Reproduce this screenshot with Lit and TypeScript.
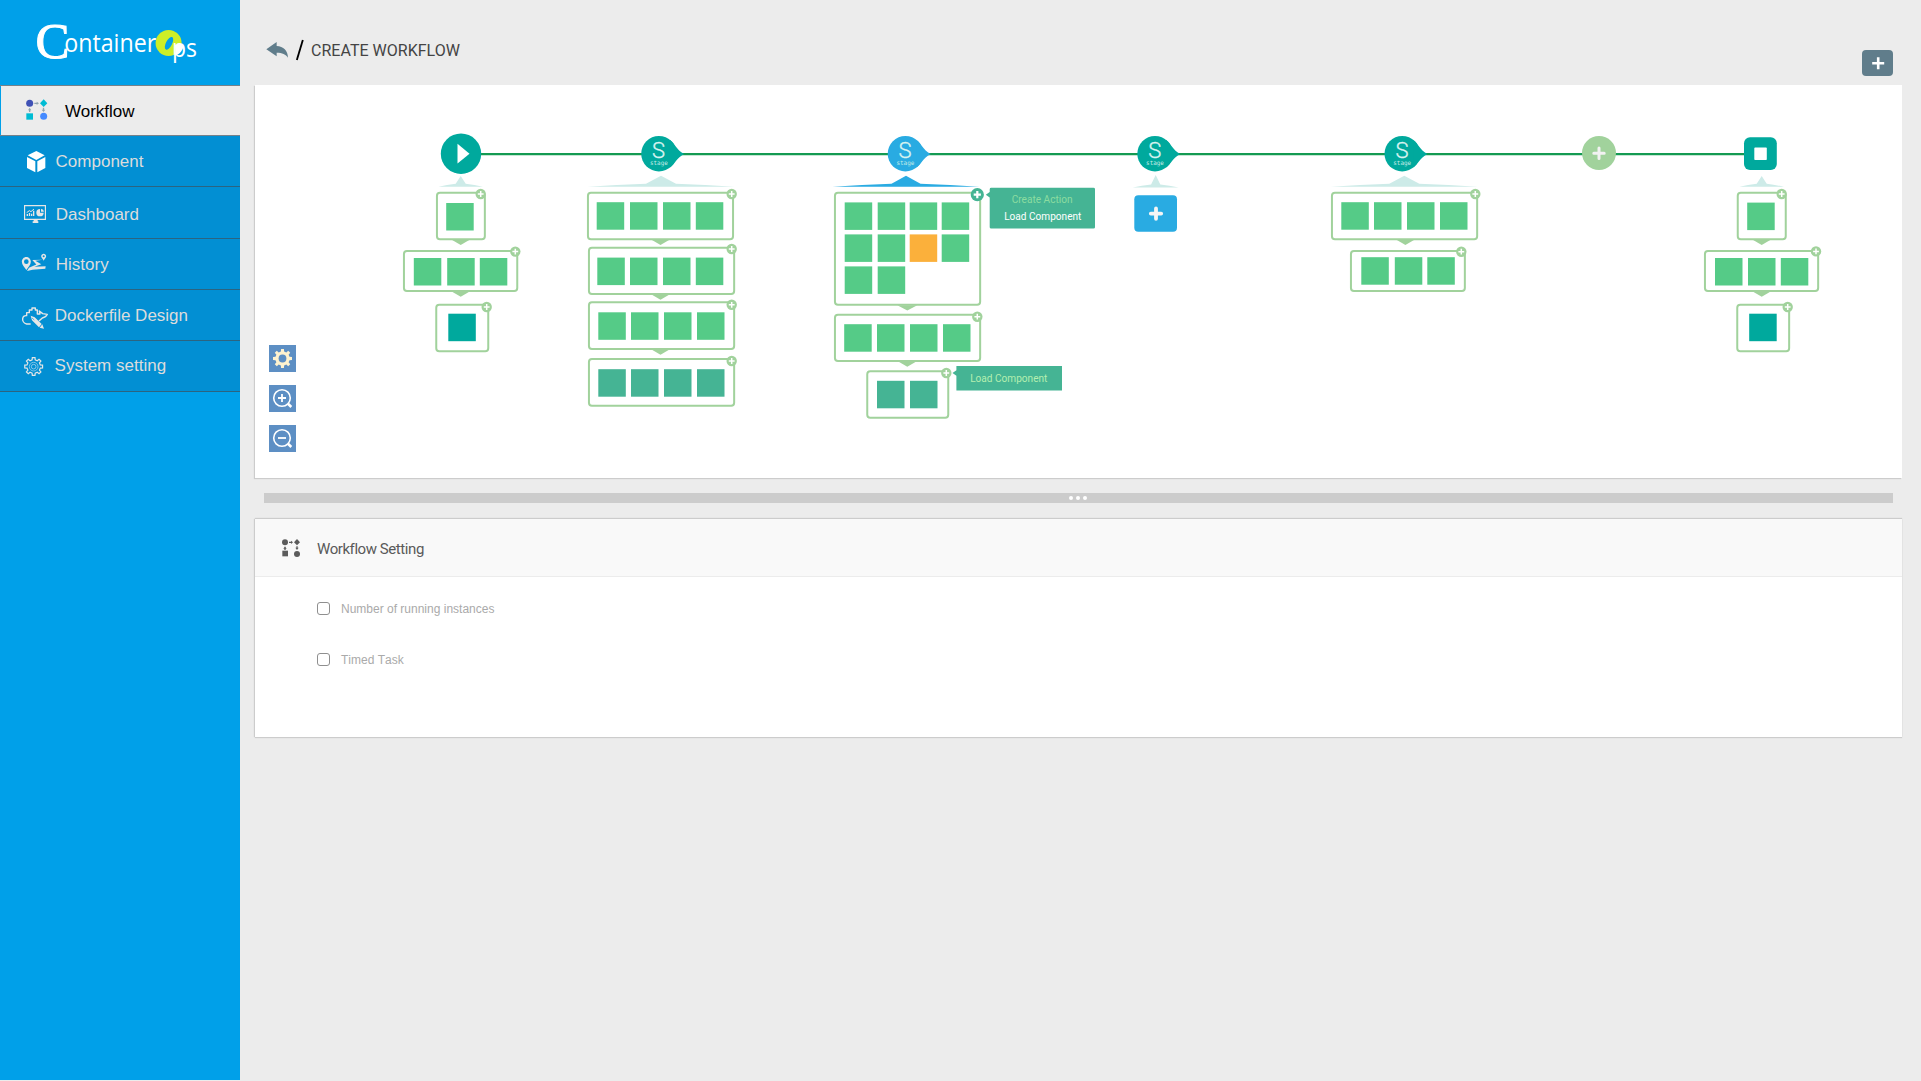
import { LitElement, html, svg, css } from "lit";
import { customElement } from "lit/decorators.js";

const GREEN = "#55cb87";
const TEAL = "#45b494";
const DEEP = "#00a99d";
const BLUE = "#29abe2";
const PALE = "#a1d29c";
const MIST = "#cdebe8";
const ORANGE = "#fbb03b";

interface Box {
  x: number; y: number; r: number; b: number;
  sq: number[]; sy: number[]; fill: string;
  px: number; py: number; big?: boolean;
  tail?: number; tailW?: number; count?: number; accent?: number;
}

const BOXES: Box[] = [
  { x: 436, y: 191.7, r: 485.8, b: 240.2, sq: [446.2], sy: [203], fill: GREEN, px: 480.7, py: 194, tail: 460.7 },
  { x: 403, y: 250, r: 518.2, b: 292, sq: [413.8, 447.2, 479.8], sy: [258], fill: GREEN, px: 515.3, py: 251.6, tail: 460.7 },
  { x: 435.3, y: 303.8, r: 489.2, b: 352.3, sq: [448.3], sy: [313.7], fill: DEEP, px: 486.7, py: 307 },

  { x: 587, y: 191.7, r: 734, b: 240.2, sq: [596.7, 630, 663, 695.8], sy: [202.2], fill: GREEN, px: 731.7, py: 194, tail: 660.5 },
  { x: 588, y: 246.7, r: 735.1, b: 295, sq: [597.3, 630, 663, 695.8], sy: [257.6], fill: GREEN, px: 731.7, py: 249, tail: 660.5 },
  { x: 588, y: 301.2, r: 735.1, b: 350, sq: [598.3, 631, 664, 697], sy: [312.3], fill: GREEN, px: 731.7, py: 304.8, tail: 660.5 },
  { x: 588, y: 358, r: 735.1, b: 406.7, sq: [598.3, 631, 664, 697], sy: [369.2], fill: TEAL, px: 731.7, py: 361 },

  { x: 834, y: 191.7, r: 981.1, b: 305.7, sq: [844.7, 877.7, 909.7, 941.7], sy: [202.4, 234.4, 266.4], fill: GREEN, px: 977.3, py: 194.7, big: true, tail: 907.3, tailW: 10, count: 10, accent: 6 },
  { x: 834, y: 313.8, r: 981.1, b: 362, sq: [844.2, 877, 910, 943], sy: [324.2], fill: GREEN, px: 977.3, py: 316.7, tail: 907.3 },
  { x: 866.3, y: 370.3, r: 949.2, b: 418.8, sq: [877, 910], sy: [380.8], fill: TEAL, px: 946.3, py: 373 },

  { x: 1331, y: 191.7, r: 1478.1, b: 240.2, sq: [1341.3, 1374, 1407, 1440], sy: [202.2], fill: GREEN, px: 1475.3, py: 194, tail: 1405.4 },
  { x: 1350, y: 250, r: 1465.8, b: 292, sq: [1361.3, 1394.8, 1427.3], sy: [257.2], fill: GREEN, px: 1461.3, py: 251.7 },

  { x: 1736.8, y: 191.7, r: 1786.7, b: 240.2, sq: [1747.2], sy: [202.6], fill: GREEN, px: 1781.7, py: 194, tail: 1761.7 },
  { x: 1704, y: 250, r: 1819.1, b: 292, sq: [1715, 1748, 1780.8], sy: [258], fill: GREEN, px: 1816, py: 251.4, tail: 1761.7 },
  { x: 1736.3, y: 303.8, r: 1790.1, b: 352.3, sq: [1749.2], sy: [313.7], fill: DEEP, px: 1787.7, py: 307 },
];

const plus = (x: number, y: number, arm: number, w: number, color: string, round = false) => svg`
  <path d="M${x - arm} ${y}H${x + arm}M${x} ${y - arm}V${y + arm}" stroke=${color}
    stroke-width=${w} stroke-linecap=${round ? "round" : "butt"} fill="none"/>`;

const box = (b: Box) => {
  const cells = b.sy.flatMap((y) => b.sq.map((x) => ({ x, y }))).slice(0, b.count ?? 99);
  const tw = b.tailW ?? 9;
  return svg`
    ${b.tail ? svg`<path d="M${b.tail - tw} ${b.b - 0.5}H${b.tail + tw}L${b.tail} ${b.b + 4.8}Z" fill=${PALE}/>` : ""}
    <rect x=${b.x + 0.95} y=${b.y + 0.95} width=${b.r - b.x - 1.9} height=${b.b - b.y - 1.9}
      rx="3" fill="#fff" stroke=${PALE} stroke-width="2"/>
    ${cells.map((c, i) => svg`<rect x=${c.x} y=${c.y} width="27.500" height="27.500" fill=${i === b.accent ? ORANGE : b.fill}/>`)}
    <circle cx=${b.px} cy=${b.py} r=${b.big ? 6.6 : 5.2} fill=${b.big ? TEAL : PALE}/>
    ${plus(b.px, b.py, b.big ? 3.6 : 2.9, b.big ? 2.2 : 1.5, "#fff")}`;
};

const stage = (x: number, color: string) => svg`
  <circle cx=${x} cy="153.700" r="17.700" fill=${color}/>
  <path d="M${x + 11} 139.800C${x + 16.5} 144 ${x + 17} 149.500 ${x + 25.2} 154C${x + 17} 158.500 ${x + 16.5} 163.500 ${x + 11} 167.600Z" fill=${color}/>
  <text class="s" x=${x - 0.3} y="158" text-anchor="middle">S</text>
  <text class="st" x=${x - 8.9} y="165" textLength="17.800" lengthAdjust="spacingAndGlyphs">stage</text>`;

const roof = (x: number, top: number, shoulder: number, half: number, color: string, base = 186.8) => svg`
  <path d="M${x} ${top}L${x + shoulder} ${base - 3}Q${x + shoulder + (half - shoulder) * 0.5} ${base - 2} ${x + half} ${base}H${x - half}Q${x - shoulder - (half - shoulder) * 0.5} ${base - 2} ${x - shoulder} ${base - 3}Z" fill=${color}/>`;

const gear = (cx: number, cy: number, teeth: number, r1: number, r2: number) => {
  const pts: string[] = [];
  const step = (Math.PI * 2) / teeth;
  for (let i = 0; i < teeth; i++) {
    const a = i * step - Math.PI / 2;
    for (const [k, r] of [[-0.29, r1], [-0.19, r2], [0.19, r2], [0.29, r1]]) {
      pts.push(`${(cx + Math.cos(a + k * step) * r).toFixed(2)} ${(cy + Math.sin(a + k * step) * r).toFixed(2)}`);
    }
  }
  return "M" + pts.join("L") + "Z";
};

const ICONS = {
  workflow: svg`
    <circle cx="89" cy="310" r="10.500" fill="#3f51b5"/>
    <path d="M131 298L142 310L131 321L120 310Z" fill="#00bcd4"/>
    <rect x="79" y="340" width="20" height="19" fill="#00bcd4"/>
    <circle cx="131" cy="349" r="10.500" fill="#448aff"/>
    <path d="M103 308H110V305L117 310L110 315V312H103ZM128.500 323H132.500V329H136L130.500 336L125 329H128.500ZM87 336V331H84L89 323L94 331H91V336Z" fill="#90a4ae"/>`,
  component: svg`
    <path d="M109 453L134 466L109 480L83 466ZM81 471L106 484V517L81 504ZM136 471V504L112 517V484Z" fill="#fff"/>`,
  dashboard: svg`
    <path fill-rule="evenodd" d="M72 45H138V90H113V94H115V99H98V94H101V90H72ZM75.500 49V86H134.500V49Z" fill="#e6e6e6"/>
    <path d="M80 78V72H84V78ZM86.500 78V69H90.500V78ZM93 78V71H97V78ZM99 78V62H103V78Z" fill="#e6e6e6"/>
    <path d="M80 68L88 62L93 65L102 57" stroke="#e6e6e6" stroke-width="3" fill="none"/>
    <path d="M120 57V68H131A11 11 0 1 1 120 57ZM123 56A10 10 0 0 1 132 65H123Z" fill="#e6e6e6"/>`,
  history: svg`
    <path fill-rule="evenodd" d="M79 201C71 201 65.500 208 65.500 215C65.500 224 74 231 79 240C84 231 92.500 224 92.500 215C92.500 208 87 201 79 201ZM79 208A7 7 0 1 1 79 222A7 7 0 1 1 79 208Z" fill="#e6e6e6"/>
    <path fill-rule="evenodd" d="M131 191.500C127 191.500 123.500 195 123.500 199C123.500 203 128 206 131 212C134 206 138.500 203 138.500 199C138.500 195 135 191.500 131 191.500ZM131 196A3 3 0 1 1 131 202A3 3 0 1 1 131 196Z" fill="#e6e6e6"/>
    <path d="M129 209L106 212.500L124 223L103 230.500L137 229L136 236L98 239.500L81 243L87 233L109 223.500L97 210Z" fill="#e6e6e6"/>`,
  docker: svg`
    <path d="M92 402H80C72 400 67 393 68 386C69 379 74 376 80 377V368H88V360H96V354H106V360H112V372H120L118 363L128 371L142 373C139 380 134 383 127 384L117 393" fill="none" stroke="#e6e6e6" stroke-width="4.200" stroke-linejoin="round"/>
    <path d="M92 377L104 382L125 402L117 412L96 391ZM127 403L132 416L119 413Z" fill="#e6e6e6"/>
    <path d="M96 384L103 390" stroke="#028fd3" stroke-width="2"/>`,
  system: svg`
    <path d=${gear(101, 529.5, 8, 20.5, 27)} fill="none" stroke="#e6e6e6" stroke-width="3.600"/>
    <circle cx="101" cy="530" r="13" fill="none" stroke="#a9d4ed" stroke-width="2.200"/>
    <circle cx="101" cy="530" r="7" fill="none" stroke="#a9d4ed" stroke-width="2.400"/>`,
};

const MENU = [
  { key: "workflow", label: "Workflow", w: 65, h: 49, y: 258 },
  { key: "component", label: "Component", w: 55.6, h: 50, y: 408 },
  { key: "dashboard", label: "Dashboard", w: 55.8, h: 51, y: -9 },
  { key: "history", label: "History", w: 55.8, h: 50, y: 147 },
  { key: "docker", label: "Dockerfile Design", w: 54.8, h: 50, y: 300 },
  { key: "system", label: "System setting", w: 54.6, h: 50, y: 453 },
] as const;

@customElement("side-nav")
class SideNav extends LitElement {
  static styles = css`
    :host { display: block; width: 240px; height: 1080px; background: #00a0e9; flex: none; }
    .logo { display: block; }
    .item {
      display: flex; border-bottom: 1px solid #2c6480; background: #028fd3;
      font: 17px "Liberation Sans", Arial, sans-serif; color: #dcdcdc; white-space: nowrap;
    }
    .item svg { display: block; flex: none; }
    .label { align-self: center; line-height: 20px; padding-top: 2px; }
    .workflow { background: #ececec; color: #000; border-top: 1px solid #75818a; border-bottom-color: #75818a; box-shadow: inset 1px 0 #00a0e9; }
    .dashboard .label { padding-top: 5px; }
    .system .label { padding-top: 0; }
    .c { font: 51px "Liberation Serif", serif; fill: #fff; }
    .l { font: 25.5px "Open Sans", sans-serif; fill: #fff; }
  `;
  render() {
    return html`
      <svg class="logo" width="240" height="85" viewBox="0 0 240 85">
        <circle cx="168.600" cy="43" r="13" fill="#cdee27"/>
        <ellipse cx="169" cy="43.300" rx="3.100" ry="7" transform="rotate(27 169 43.300)" fill="#00a0e9"/>
        <path d="M175 45C178 43.500 181.500 44 183.500 46C183 50 180 54 175.500 55.500Z" fill="#fff"/>
        <text class="c" x="35.500" y="58.400" stroke="#fff" stroke-width="1" textLength="34" lengthAdjust="spacingAndGlyphs">C</text>
        <text class="l" x="64.200" y="52.400" textLength="92" lengthAdjust="spacingAndGlyphs">ontainer</text>
        <text class="l" x="172" y="57" textLength="25" lengthAdjust="spacingAndGlyphs">ps</text>
      </svg>
      ${MENU.map((m) => html`
        <div class="item ${m.key}">
          <svg width=${m.w} height=${m.h} viewBox="0 ${m.y} ${m.w * 3} ${m.h * 3}">${ICONS[m.key]}</svg>
          <span class="label">${m.label}</span>
        </div>`)}`;
  }
}

@customElement("workflow-canvas")
class WorkflowCanvas extends LitElement {
  static styles = css`
    :host { display: block; position: relative; height: 393px; background: #fff; box-shadow: -1px 1px 1px #ccc; }
    .graph { display: block; }
    .tools { position: absolute; left: 14px; top: 260px; display: flex; flex-direction: column; gap: 13px; }
    .tool { display: block; background: #5d8fc4; }
    .s { font: 22px Roboto, sans-serif; font-weight: 300; fill: #d9f3f0; stroke: #d9f3f0; stroke-width: 0.3px; }
    .st { font: 6.2px "DejaVu Sans Mono", monospace; fill: #c4ece8; }
    .tip { font: 11px Roboto, sans-serif; }
  `;
  render() {
    return html`
      <svg class="graph" width="1647" height="393" viewBox="255 85 1647 393">
        <path d="M480 154.100H1746" stroke="#149a52" stroke-width="2.200"/>
        <circle cx="461" cy="153.700" r="20.200" fill=${DEEP}/>
        <path d="M457.500 143.800V163.500L469.500 153.700Z" fill="#fff"/>
        ${stage(658.9, DEEP)}${stage(905.4, BLUE)}${stage(1155, DEEP)}${stage(1402.2, DEEP)}
        <circle cx="1599" cy="153" r="17" fill=${PALE}/>
        ${plus(1599, 153.3, 5.2, 3, "#f2f2f2", true)}
        <rect x="1744" y="137.200" width="32.800" height="32.800" rx="6" fill=${DEEP}/>
        <rect x="1754.300" y="147.600" width="12.500" height="12.500" rx="0.800" fill="#fff"/>

        ${roof(460.7, 176, 5, 22.3, MIST)}
        ${roof(661, 175.7, 15, 73.5, MIST)}
        ${roof(906, 175.7, 14.5, 73.5, BLUE)}
        ${roof(1155.7, 175, 4.6, 23, MIST, 187.6)}
        ${roof(1404.3, 175.7, 15, 73.5, MIST)}
        ${roof(1761.7, 176, 5, 22.3, MIST)}

        ${BOXES.map(box)}

        <rect x="1134.300" y="195.200" width="42.700" height="36.600" rx="4" fill=${BLUE}/>
        ${plus(1156, 213.6, 5.2, 3.8, "#f5f5f5", true)}

        <path d="M989.700 189.200Q989.700 187.800 991.200 187.800H1093.500Q1095 187.800 1095 189.200V227.200Q1095 228.600 1093.500 228.600H991.200Q989.700 228.600 989.700 227.200V197.500L985.800 194.700L989.700 192Z" fill=${TEAL}/>
        <text class="tip" x="1011.700" y="203.300" fill="#8cdca0" textLength="60.800" lengthAdjust="spacingAndGlyphs">Create Action</text>
        <text class="tip" x="1004.200" y="220" fill="#fff" textLength="77.200" lengthAdjust="spacingAndGlyphs">Load Component</text>
        <path d="M956.400 366H1062V390.600H956.400V375.700L952.500 373L956.400 370.300Z" fill=${TEAL}/>
        <text class="tip" x="970.200" y="382" fill="#b4efb0" textLength="77.200" lengthAdjust="spacingAndGlyphs">Load Component</text>
      </svg>
      <div class="tools">
        <svg class="tool" width="27" height="27" viewBox="0 0 27 27">
          <path d=${gear(13.5, 13.5, 8, 7.2, 9.6)} fill="#fff3cf"/><circle cx="13.500" cy="13.500" r="3.900" fill="#5d8fc4"/>
        </svg>
        ${[true, false].map((zoomIn) => html`
          <svg class="tool" width="27" height="27" viewBox="0 0 27 27" fill="none" stroke="#fff">
            <circle cx="13" cy="13" r="8.300" stroke-width="1.600"/>
            <path d="M19 18.800L22.300 22" stroke-width="2.600"/>
            <path d=${zoomIn ? "M9 13H17M13 9V17" : "M9 13H17"} stroke-width="1.800"/>
          </svg>`)}
      </div>`;
  }
}

@customElement("workflow-setting")
class WorkflowSetting extends LitElement {
  static styles = css`
    :host { display: block; height: 218px; background: #fff; box-shadow: -1px 0 1px #ccc, 0 1px 1px #ccc, 0 -1px 1px #ccc; }
    .head { display: flex; align-items: center; height: 57px; background: #f9f9f9; border-bottom: 1px solid #ececec; padding-left: 27px; }
    .head svg { display: block; margin-right: 17px; }
    .title { font: 15px/20px Roboto, sans-serif; letter-spacing: -0.43px; color: #5a5a5a; padding-top: 2px; }
    .rows { display: flex; flex-direction: column; gap: 37px; padding: 25px 0 0 62px; }
    .row { display: flex; align-items: flex-start; gap: 11px; height: 14px; font: 12px/14px "Liberation Sans", Arial, sans-serif; font-kerning: none; color: #aaa; }
    .check { width: 11px; height: 11px; border: 1px solid #8f8f8f; border-radius: 3px; background: #fff; }
  `;
  render() {
    return html`
      <div class="head">
        <svg width="18" height="18" viewBox="0 0 54 54" fill="#5c5c5c">
          <circle cx="9" cy="10" r="9"/><path d="M45 0L54 10L45 19L36 10Z"/>
          <rect x="1" y="35" width="17" height="17"/><circle cx="45" cy="45" r="9"/>
          <path d="M21 8H27V5L33 10L27 15V12H21ZM43 22H47V26H50L45 33L40 26H43ZM7 33V29H4L9 22L14 29H11V33Z"/>
        </svg>
        <span class="title">Workflow Setting</span>
      </div>
      <div class="rows">
        ${["Number of running instances", "Timed Task"].map((t) => html`
          <div class="row"><span class="check"></span><span>${t}</span></div>`)}
      </div>`;
  }
}

@customElement("app-root")
class AppRoot extends LitElement {
  static styles = css`
    :host { display: flex; width: 1921px; height: 1081px; background: #ececec; overflow: hidden; }
    .main { flex: 1; padding: 0 19px 0 15px; display: flex; flex-direction: column; }
    .top { display: flex; height: 85px; box-sizing: border-box; padding: 0 9px 0 10px; }
    .back { display: block; flex: none; margin-right: 7px; }
    .crumb { font: 16px/20px Roboto, sans-serif; letter-spacing: 0.02px; color: #444; margin-top: 41px; }
    .add { display: block; margin: 50px 0 0 auto; }
    .split { display: flex; justify-content: center; align-items: center; gap: 3px; height: 10px; margin: 15px 9px 16px; padding-right: 1px; background: #ccc; }
    .dot { width: 4px; height: 4px; border-radius: 2px; background: #fff; }
  `;
  render() {
    return html`
      <side-nav></side-nav>
      <div class="main">
        <div class="top">
          <svg class="back" width="39" height="85" viewBox="60 -60 117 255">
            <path d="M64 88L95 66V78C115 79 129 92 129 113C122 103 112 98 95 98V109Z" fill="#607d8b"/>
            <path d="M155.500 120L173.500 60" stroke="#000" stroke-width="5.500"/>
          </svg>
          <span class="crumb">CREATE WORKFLOW</span>
          <svg class="add" width="31" height="26" viewBox="0 0 31 26">
            <rect width="31" height="26" rx="4" fill="#607d8b"/>${plus(16.2, 13.2, 6, 2.6, "#fff")}
          </svg>
        </div>
        <workflow-canvas></workflow-canvas>
        <div class="split"><span class="dot"></span><span class="dot"></span><span class="dot"></span></div>
        <workflow-setting></workflow-setting>
      </div>`;
  }
}
